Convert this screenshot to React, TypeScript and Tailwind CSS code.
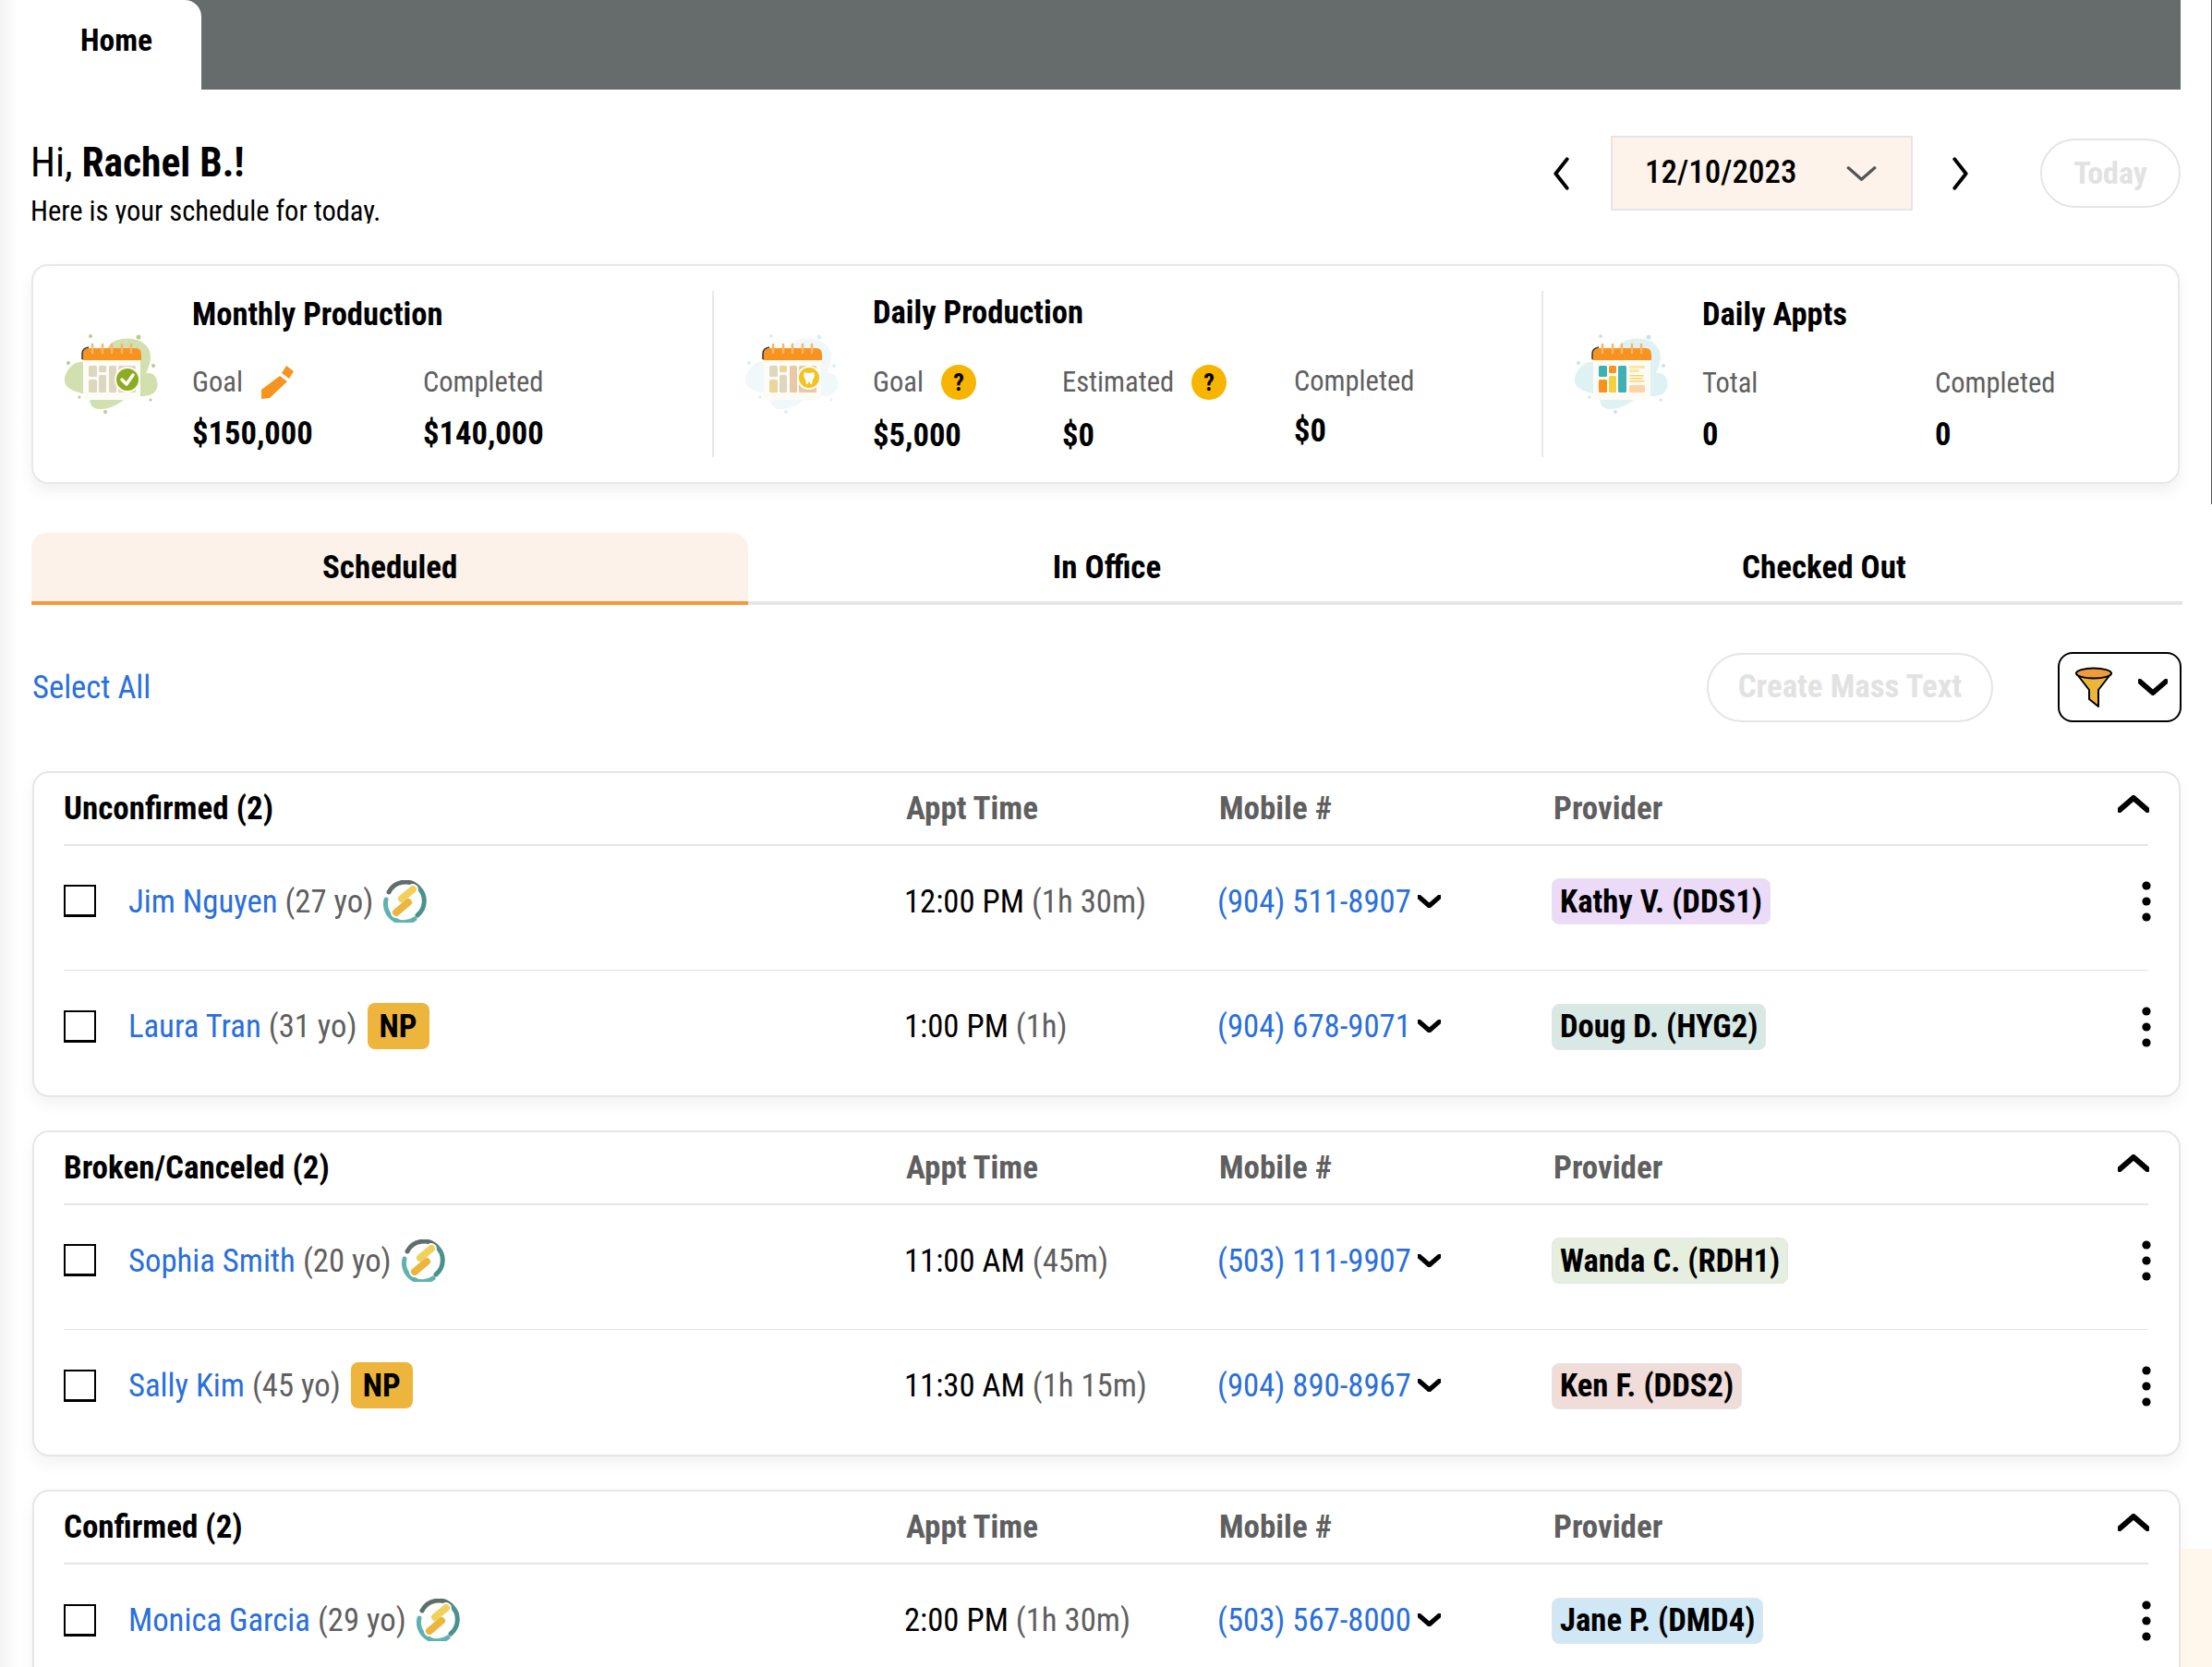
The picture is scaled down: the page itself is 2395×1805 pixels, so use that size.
import React from "react";

const RING_X = [50, 61, 71, 82, 92];

function Calendar({ blob, dots, children }: { blob: string; dots: string; children: React.ReactNode }) {
  return (
    <svg viewBox="0 0 140 120" className="h-[120px] w-[140px] shrink-0">
      <path
        d="M68 34C75 24 105 22 112 40C115 50 110 60 108 64C118 62 122 72 120 80C117 90 105 90 90 88C82 95 72 103 58 103C48 103 46 95 48 88C35 85 20 82 20 72C20 60 32 50 40 52C50 55 62 45 68 34Z"
        fill={blob}
      />
      {[[48, 24, 2], [100, 25, 2.5], [24, 53, 2], [116, 56, 2], [36, 90, 1.5], [113, 93, 1.5], [64, 106, 2]].map(([cx, cy, r]) => (
        <circle key={cx} cx={cx} cy={cy} r={r} fill={dots} />
      ))}
      <rect x="40" y="44" width="62" height="49" rx="5" fill="#fdfbf5" />
      <path d="M39 50V44Q39 37 46 37H97Q103 37 103 44V50Z" fill="#f7931e" />
      <path d="M39 49V43Q39 37 46 36" fill="none" stroke="#333" strokeWidth="1.5" />
      {RING_X.map((x) => (
        <line key={x} x1={x} x2={x} y1="33" y2="42" stroke="#fbb563" strokeWidth="2.5" strokeLinecap="round" />
      ))}
      {children}
    </svg>
  );
}

function Cell({ x, y, w, h, fill }: { x: number; y: number; w: number; h: number; fill: string }) {
  return <rect x={x} y={y} width={w} height={h} rx="1.5" fill={fill} />;
}

function MonthlyIcon() {
  const c = "#dcd8bf";
  return (
    <Calendar blob="#d2dfae" dots="#b9cc8a">
      <Cell x={46} y={56} w={9} h={12} fill={c} />
      <Cell x={46} y={71} w={9} h={14} fill={c} />
      <Cell x={57} y={56} w={8} h={7} fill={c} />
      <Cell x={57} y={66} w={8} h={19} fill={c} />
      <Cell x={68} y={56} w={8} h={29} fill={c} />
      <Cell x={78} y={56} w={19} h={29} fill={c} />
      <circle cx="88" cy="71" r="13" fill="#8dac22" stroke="#fdfbf5" strokeWidth="2" />
      <path d="M82 71L87 76L94 66" fill="none" stroke="#fff" strokeWidth="3.5" strokeLinecap="round" strokeLinejoin="round" />
    </Calendar>
  );
}

function DailyIcon() {
  return (
    <Calendar blob="#f1f8f9" dots="#dceff1">
      <Cell x={46} y={56} w={9} h={12} fill="#dcd8bf" />
      <Cell x={46} y={71} w={9} h={14} fill="#e9d79a" />
      <Cell x={57} y={56} w={8} h={7} fill="#e9d79a" />
      <Cell x={57} y={66} w={8} h={19} fill="#dcd8bf" />
      <Cell x={68} y={56} w={8} h={29} fill="#e8c9a5" />
      <Cell x={78} y={56} w={19} h={29} fill="#e8c9a5" />
      <circle cx="89" cy="69" r="12" fill="#f3c31f" stroke="#fdfbf5" strokeWidth="2" />
      <path d="M84 63Q89 65 94 63Q96 67 93 71L92 76Q90 77 89 72Q88 77 86 76L85 71Q82 67 84 63Z" fill="#fff" />
    </Calendar>
  );
}

function ApptsIcon() {
  return (
    <Calendar blob="#dff2f3" dots="#c5e6e8">
      <Cell x={46} y={56} w={9} h={12} fill="#3fb1b3" />
      <Cell x={46} y={71} w={9} h={14} fill="#f7931e" />
      <Cell x={57} y={56} w={8} h={8} fill="#f7931e" />
      <Cell x={57} y={67} w={8} h={18} fill="#f3d23f" />
      <Cell x={67} y={56} w={9} h={29} fill="#3fb1b3" />
      <Cell x={79} y={56} w={17} h={3} fill="#fbe7a0" />
      <Cell x={79} y={60} w={11} h={3} fill="#fbe7a0" />
      <Cell x={79} y={66} w={16} h={1.5} fill="#fbd36b" />
      <Cell x={79} y={69} w={15} h={1.5} fill="#fbd36b" />
      <Cell x={79} y={72} w={17} h={1.5} fill="#fbd36b" />
      <Cell x={79} y={77} w={17} h={8} fill="#fdd3a8" />
    </Calendar>
  );
}

function Pencil() {
  return (
    <svg viewBox="0 0 36 36" className="h-[36px] w-[36px]" fill="#f7931e">
      <path d="M28 0L36 6L31 14L23 8Z" />
      <path d="M21 11L29 17L10 35L1 36L1 26Z" />
    </svg>
  );
}

function Help() {
  return (
    <span className="flex h-[38px] w-[38px] items-center justify-center rounded-full bg-[#f7b500] text-[26px] font-bold text-black">?</span>
  );
}

function Chevron({ dir, className, stroke, width }: { dir: "left" | "right" | "up" | "down"; className: string; stroke: string; width: number }) {
  const d = { left: "M14 2L3 16L14 30", right: "M3 2L14 16L3 30", up: "M2 16L17 3L32 16", down: "M2 3L17 16L32 3" }[dir];
  const box = dir === "left" || dir === "right" ? "0 0 17 32" : "0 0 34 19";
  return (
    <svg viewBox={box} className={className} fill="none" stroke={stroke} strokeWidth={width} strokeLinecap="round" strokeLinejoin="round">
      <path d={d} />
    </svg>
  );
}

function Bolt() {
  return (
    <svg viewBox="0 0 47 46" className="h-[46px] w-[47px] shrink-0" fill="none" strokeLinecap="round">
      <path d="M6 13A20 20 0 0 1 38 8" stroke="#5f6e6d" strokeWidth="5" />
      <path d="M38 8A20 20 0 0 1 37 38" stroke="#4a928b" strokeWidth="5" />
      <path d="M3 21A20 20 0 0 0 34 42" stroke="#5fb2b0" strokeWidth="5" />
      <path d="M32 10L20 20M27 24L14 35" stroke="#fff" strokeWidth="12" />
      <path d="M27 24L14 35" stroke="#edb53c" strokeWidth="8" />
      <path d="M32 10L20 20" stroke="#f0d15c" strokeWidth="8" />
    </svg>
  );
}

function Kebab() {
  return (
    <svg viewBox="0 0 10 44" className="h-[44px] w-[10px]" fill="#000">
      <circle cx="5" cy="5" r="4.6" />
      <circle cx="5" cy="22" r="4.6" />
      <circle cx="5" cy="39" r="4.6" />
    </svg>
  );
}

function Funnel() {
  return (
    <svg viewBox="0 0 40 44" className="h-[44px] w-[40px]" stroke="#000" strokeWidth="2" strokeLinejoin="round">
      <path d="M1 7L15 25V35L25 43V25L39 7Z" fill="#edb53c" />
      <ellipse cx="20" cy="7" rx="19" ry="5.5" fill="#ef9a3d" />
    </svg>
  );
}

function Stat({ label, value, icon, width, gap = "mt-[14px]", labelClass = "" }: { label: string; value: string; icon?: React.ReactNode; width: string; gap?: string; labelClass?: string }) {
  return (
    <div className={width}>
      <div className={`flex h-[40px] items-center gap-[19px] text-[30.5px] text-[#5f5f5f] ${labelClass}`}>
        <span>{label}</span>
        {icon}
      </div>
      <div className={`${gap} text-[34.6px] leading-[42px] font-bold text-black`}>{value}</div>
    </div>
  );
}

function Summary({ title, icon, titleClass = "mt-[32px]", children }: { title: string; icon: React.ReactNode; titleClass?: string; children: React.ReactNode }) {
  return (
    <div className="flex items-start pl-[14px]">
      <div className="mt-[52px] mr-[18px]">{icon}</div>
      <div>
        <h2 className={`${titleClass} text-[34.6px] leading-[40px] font-bold text-black`}>{title}</h2>
        <div className="mt-[34px] flex">{children}</div>
      </div>
    </div>
  );
}

type Patient = { name: string; age: string; tag: "bolt" | "np"; time: string; len: string; phone: string; provider: string; color: string };

const groups: { title: string; rows: Patient[] }[] = [
  {
    title: "Unconfirmed (2)",
    rows: [
      { name: "Jim Nguyen", age: "(27 yo)", tag: "bolt", time: "12:00 PM", len: "(1h 30m)", phone: "(904) 511-8907", provider: "Kathy V. (DDS1)", color: "bg-[#ecdaf9]" },
      { name: "Laura Tran", age: "(31 yo)", tag: "np", time: "1:00 PM", len: "(1h)", phone: "(904) 678-9071", provider: "Doug D. (HYG2)", color: "bg-[#d8e8e4]" },
    ],
  },
  {
    title: "Broken/Canceled (2)",
    rows: [
      { name: "Sophia Smith", age: "(20 yo)", tag: "bolt", time: "11:00 AM", len: "(45m)", phone: "(503) 111-9907", provider: "Wanda C. (RDH1)", color: "bg-[#e6eee0]" },
      { name: "Sally Kim", age: "(45 yo)", tag: "np", time: "11:30 AM", len: "(1h 15m)", phone: "(904) 890-8967", provider: "Ken F. (DDS2)", color: "bg-[#f0dcd8]" },
    ],
  },
  {
    title: "Confirmed (2)",
    rows: [
      { name: "Monica Garcia", age: "(29 yo)", tag: "bolt", time: "2:00 PM", len: "(1h 30m)", phone: "(503) 567-8000", provider: "Jane P. (DMD4)", color: "bg-[#d0e7f5]" },
    ],
  },
];

const COLS = "grid grid-cols-[912px_339px_362px_1fr]";

function Row({ p, last }: { p: Patient; last: boolean }) {
  return (
    <div className={`${COLS} h-[135px] items-center pb-[14px] text-[34.7px] ${last ? "" : "border-b border-[#e5e5e5]"}`}>
      <div className="flex items-center">
        <span className="h-[35px] w-[35px] border-2 border-b-[3px] border-black" />
        <span className="ml-[35px] text-[#2a6fdb]">{p.name}</span>
        <span className="ml-[8px] text-[#5f5f5f]">{p.age}</span>
        {p.tag === "bolt" ? (
          <span className="ml-[11px]"><Bolt /></span>
        ) : (
          <span className="ml-[11px] flex h-[50px] w-[67px] items-center justify-center rounded-[8px] bg-[#edb53c] font-bold text-black">NP</span>
        )}
      </div>
      <div className="-ml-[2px]">
        <span className="text-black">{p.time}</span> <span className="text-[#5f5f5f]">{p.len}</span>
      </div>
      <div className="-ml-[2px] flex items-center gap-[7px] text-[#2a6fdb]">
        {p.phone}
        <Chevron dir="down" stroke="#000" width={7} className="h-[14px] w-[25px]" />
      </div>
      <div className="-ml-[2px] flex items-center justify-between">
        <span className={`flex h-[50px] items-center rounded-[8px] border border-[#e5e5e5] px-[8px] font-bold text-black ${p.color}`}>{p.provider}</span>
        <span className="-mr-[3px]"><Kebab /></span>
      </div>
    </div>
  );
}

export default function App() {
  return (
    <div className="relative flex h-[1805px] w-[2395px] overflow-hidden bg-white [font-family:Roboto,sans-serif] [font-stretch:75%]">
      <div className="absolute top-0 left-0 h-full w-[20px] bg-gradient-to-r from-[#f3f3f3] to-white" />
      <main className="relative w-[2361px] pl-[34px]">
        <div className="flex h-[97px] bg-[#656c6b]">
          <div className="flex w-[184px] items-center justify-center rounded-tr-[18px] bg-white pb-[8px] text-[33.5px] font-bold text-black">Home</div>
        </div>

        <div className="mt-[50px] flex h-[99px] items-start justify-between">
          <div className="-ml-px">
            <h1 className="mt-[6px] text-[43.5px] leading-[48px] text-black">Hi, <b>Rachel B.!</b></h1>
            <p className="mt-[10px] h-[31px] overflow-hidden text-[30.5px] leading-[36px] text-black">Here is your schedule for today.</p>
          </div>
          <div className="flex h-[81px] items-center">
            <Chevron dir="left" stroke="#000" width={3.5} className="h-[36px] w-[19px]" />
            <div className="ml-[44px] flex h-[81px] w-[327px] items-center justify-between border-2 border-[#e5e5e5] bg-[#fdf3ea] pr-[37px] pl-[35px] text-[35px] font-medium text-black">
              12/10/2023
              <Chevron dir="down" stroke="#555" width={3.5} className="h-[18px] w-[33px]" />
            </div>
            <Chevron dir="right" stroke="#000" width={3.5} className="ml-[42px] h-[36px] w-[19px]" />
            <div className="ml-[77px] flex h-[75px] w-[152px] items-center justify-center rounded-full border-2 border-[#e5e5e5] text-[34px] font-bold text-[#e2e2e2]">Today</div>
          </div>
        </div>

        <section className="mt-[40px] flex h-[238px] w-[2326px] items-center rounded-[18px] border-2 border-[#e8e8e8] bg-white shadow-[0_8px_16px_rgba(0,0,0,0.06)]">
          <div className="h-full w-[735px]">
            <Summary title="Monthly Production" icon={<MonthlyIcon />}>
              <Stat label="Goal" value="$150,000" width="w-[250px]" icon={<Pencil />} />
              <Stat label="Completed" value="$140,000" width="w-[250px]" />
            </Summary>
          </div>
          <div className="h-[180px] w-[2px] bg-[#e8e8e8]" />
          <div className="h-full w-[896px]">
            <Summary title="Daily Production" titleClass="mt-[30px]" icon={<DailyIcon />}>
              <Stat label="Goal" value="$5,000" width="w-[205px]" gap="mt-[16px]" labelClass="mt-[2px]" icon={<Help />} />
              <Stat label="Estimated" value="$0" width="w-[251px]" gap="mt-[16px]" labelClass="mt-[2px]" icon={<Help />} />
              <Stat label="Completed" value="$0" width="w-[250px]" gap="mt-[12px]" labelClass="mt-[1px]" />
            </Summary>
          </div>
          <div className="h-[180px] w-[2px] bg-[#e8e8e8]" />
          <div className="h-full flex-1">
            <Summary title="Daily Appts" icon={<ApptsIcon />}>
              <Stat label="Total" value="0" width="w-[252px]" labelClass="mt-px" />
              <Stat label="Completed" value="0" width="w-[200px]" labelClass="mt-px" />
            </Summary>
          </div>
        </section>

        <nav className="mt-[53px] -mr-[2px] grid h-[78px] grid-cols-3 border-b-4 border-[#e5e5e5] text-[35px] font-bold text-black">
          <div className="-mb-[4px] flex items-center justify-center rounded-t-[16px] border-b-4 border-[#f7983c] bg-[#fdf2e9] pt-[2px]">Scheduled</div>
          <div className="flex items-center justify-center pt-[2px]">In Office</div>
          <div className="flex items-center justify-center pt-[2px]">Checked Out</div>
        </nav>

        <div className="mt-[51px] flex h-[76px] items-center pl-px">
          <span className="pt-[2px] text-[34.6px] text-[#2a6fdb]">Select All</span>
          <div className="ml-auto flex h-[75px] w-[310px] items-center justify-center rounded-full border-2 border-[#e5e5e5] text-[35px] font-bold text-[#e2e2e2]">Create Mass Text</div>
          <div className="mr-[-1px] ml-[70px] flex h-[76px] w-[134px] items-center rounded-[16px] border-2 border-black bg-white pl-[17px]">
            <Funnel />
            <Chevron dir="down" stroke="#000" width={6} className="ml-[28px] h-[18px] w-[32px]" />
          </div>
        </div>

        <div className="mt-[53px] ml-px flex flex-col gap-[36px]">
          {groups.map((g) => (
            <section key={g.title} className="shrink-0 rounded-[18px] border-2 border-[#e6e6e6] bg-white pr-[33px] pl-[32px] shadow-[0_8px_16px_rgba(0,0,0,0.05)]">
              <div className={`${COLS} h-[79px] items-center border-b-2 border-[#e5e5e5] pt-[2px] text-[35px] font-bold`}>
                <span className="text-black">{g.title}</span>
                <span className="text-[#5f5f5f]">Appt Time</span>
                <span className="text-[#5f5f5f]">Mobile #</span>
                <div className="flex items-center justify-between">
                  <span className="text-[#5f5f5f]">Provider</span>
                  <Chevron dir="up" stroke="#000" width={6} className="-mt-[12px] -mr-[1px] h-[19px] w-[34px]" />
                </div>
              </div>
              {g.rows.map((p, i) => (
                <Row key={p.name} p={p} last={i === g.rows.length - 1} />
              ))}
            </section>
          ))}
        </div>
      </main>
      <aside className="relative flex flex-1 flex-col justify-between">
        <div className="h-[546px] border-r border-[#555]" />
        <div className="h-[128px] bg-[#fdf7ec]" />
      </aside>
    </div>
  );
}
